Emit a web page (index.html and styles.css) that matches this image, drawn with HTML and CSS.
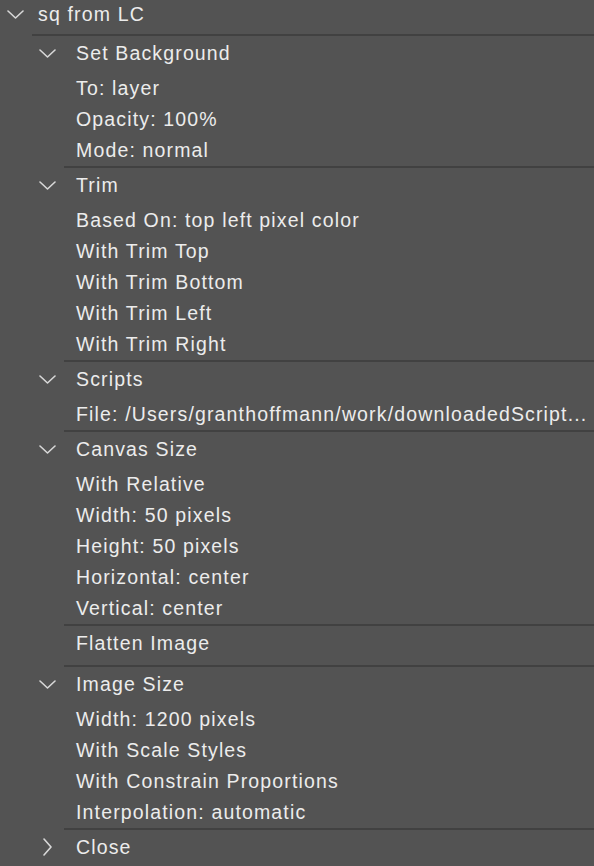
FILE: index.html
```html
<!DOCTYPE html>
<html>
<head>
<meta charset="utf-8">
<link rel="stylesheet" href="styles.css">
</head>
<body>
<div class="panel">
  <div class="action">
    <span class="chev-col l0"><svg class="chev-down" width="17" height="9" viewBox="0 0 17 9"><path d="M1 1 L8.5 8 L16 1"/></svg></span>
    <span class="label">sq from LC</span>
  </div>
  <div class="sep sep0"></div>

  <div class="cmd">
    <div class="head">
      <span class="chev-col l1"><svg class="chev-down" width="17" height="9" viewBox="0 0 17 9"><path d="M1 1 L8.5 8 L16 1"/></svg></span>
      <span class="label">Set Background</span>
    </div>
    <div class="param">To: layer</div>
    <div class="param">Opacity: 100%</div>
    <div class="param">Mode: normal</div>
  </div>
  <div class="sep sep1"></div>

  <div class="cmd">
    <div class="head">
      <span class="chev-col l1"><svg class="chev-down" width="17" height="9" viewBox="0 0 17 9"><path d="M1 1 L8.5 8 L16 1"/></svg></span>
      <span class="label">Trim</span>
    </div>
    <div class="param">Based On: top left pixel color</div>
    <div class="param">With Trim Top</div>
    <div class="param">With Trim Bottom</div>
    <div class="param">With Trim Left</div>
    <div class="param">With Trim Right</div>
  </div>
  <div class="sep sep1"></div>

  <div class="cmd">
    <div class="head">
      <span class="chev-col l1"><svg class="chev-down" width="17" height="9" viewBox="0 0 17 9"><path d="M1 1 L8.5 8 L16 1"/></svg></span>
      <span class="label">Scripts</span>
    </div>
    <div class="param">File: /Users/granthoffmann/work/downloadedScript...</div>
  </div>
  <div class="sep sep1"></div>

  <div class="cmd">
    <div class="head">
      <span class="chev-col l1"><svg class="chev-down" width="17" height="9" viewBox="0 0 17 9"><path d="M1 1 L8.5 8 L16 1"/></svg></span>
      <span class="label">Canvas Size</span>
    </div>
    <div class="param">With Relative</div>
    <div class="param">Width: 50 pixels</div>
    <div class="param">Height: 50 pixels</div>
    <div class="param">Horizontal: center</div>
    <div class="param">Vertical: center</div>
  </div>
  <div class="sep sep1"></div>

  <div class="cmd">
    <div class="head leaf">
      <span class="chev-col l1"></span>
      <span class="label">Flatten Image</span>
    </div>
  </div>
  <div class="sep sep1"></div>

  <div class="cmd">
    <div class="head">
      <span class="chev-col l1"><svg class="chev-down" width="17" height="9" viewBox="0 0 17 9"><path d="M1 1 L8.5 8 L16 1"/></svg></span>
      <span class="label">Image Size</span>
    </div>
    <div class="param">Width: 1200 pixels</div>
    <div class="param">With Scale Styles</div>
    <div class="param">With Constrain Proportions</div>
    <div class="param">Interpolation: automatic</div>
  </div>
  <div class="sep sep1"></div>

  <div class="cmd">
    <div class="head">
      <span class="chev-col l1 right"><svg class="chev-right" width="9" height="18" viewBox="0 0 9 18"><path d="M1 1 L8 9 L1 17"/></svg></span>
      <span class="label">Close</span>
    </div>
  </div>
</div>
</body>
</html>
```

FILE: styles.css
```css
html, body {
  margin: 0;
  padding: 0;
  background: #535353;
}

.panel {
  width: 594px;
  height: 866px;
  overflow: hidden;
  background: #535353;
  color: #ececec;
  font-family: "Liberation Sans", Arial, sans-serif;
  font-size: 19.5px;
  letter-spacing: 1.15px;
}

.action {
  display: flex;
  align-items: center;
  height: 28px;
  padding-bottom: 6px;
}

.chev-col {
  display: flex;
  align-items: center;
  flex-shrink: 0;
}

.chev-col.l0 {
  width: 38px;
  padding-left: 7px;
  box-sizing: border-box;
}

.chev-col.l1 {
  width: 76px;
  padding-left: 39px;
  box-sizing: border-box;
}

.chev-col.l1.right {
  padding-left: 43px;
}

.chev-down path,
.chev-right path {
  fill: none;
  stroke: #d8d8d8;
  stroke-width: 1.6;
  stroke-linecap: round;
  stroke-linejoin: round;
}

.label {
  white-space: nowrap;
}

.sep {
  height: 2px;
  background: #414141;
}

.sep0 {
  margin-left: 32px;
}

.sep1 {
  margin-left: 64px;
}

.head {
  display: flex;
  align-items: center;
  height: 34px;
  padding-bottom: 3px;
}

.head.leaf {
  height: 35px;
  padding-bottom: 4px;
}

.param {
  height: 31px;
  display: flex;
  align-items: center;
  padding-left: 76px;
  white-space: nowrap;
}
```
